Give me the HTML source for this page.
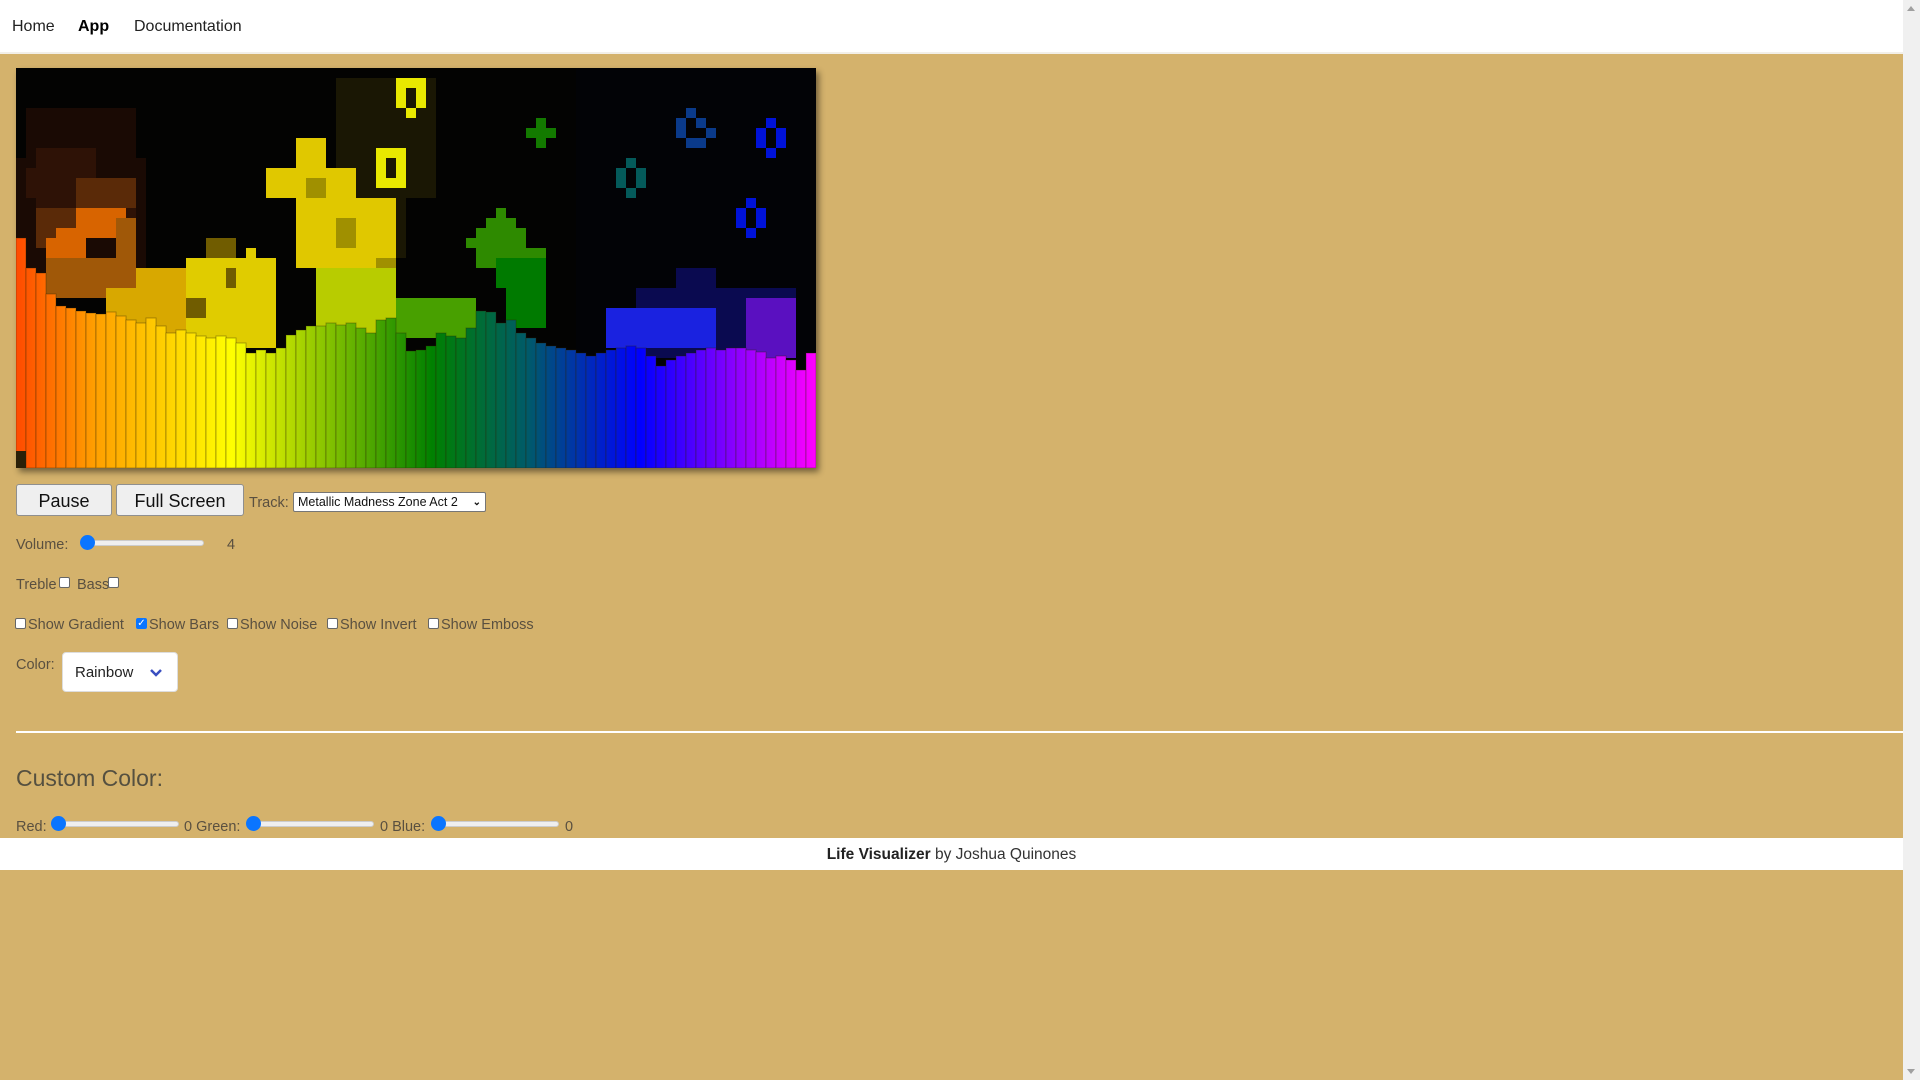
<!DOCTYPE html>
<html><head><meta charset="utf-8"><style>
*{box-sizing:border-box}
html,body{margin:0;padding:0}
body{width:1920px;height:1080px;background:#d4b26c;font-family:"Liberation Sans",sans-serif;position:relative;overflow:hidden;color:#5a5040}
.a{position:absolute;white-space:nowrap}
#nav{left:0;top:0;width:1903px;height:54px;background:#fff;border-bottom:2px solid #f2efe8}
#nav span{position:absolute;top:18px;font-size:16px;color:#222}
#sb{left:1903px;top:0;width:17px;height:1080px;background:#f0f0f0}
.btn{position:absolute;background:#efefef;border:1px solid #8f8f8f;border-radius:3px;font-size:18px;color:#111;text-align:center;line-height:32px}
.t{font-size:14.5px;color:#5a5040}
.cb{position:absolute;width:11px;height:11px;border:1px solid #666;background:#fff;border-radius:2px}
.rng{position:absolute;height:6px;background:#efefef;border:1px solid #ccc;border-radius:3px}
.th{position:absolute;width:15px;height:15px;border-radius:50%;background:#0a75ff}
</style></head><body>
<div id="nav" class="a"><span style="left:12px">Home</span><span style="left:78px;font-weight:bold;color:#000">App</span><span style="left:134px">Documentation</span></div>
<div id="sb" class="a"><div style="position:absolute;left:4px;top:6px;width:0;height:0;border-left:4px solid transparent;border-right:4px solid transparent;border-bottom:5px solid #a0a0a0"></div><div style="position:absolute;left:4px;bottom:6px;width:0;height:0;border-left:4px solid transparent;border-right:4px solid transparent;border-top:5px solid #a0a0a0"></div></div>

<svg class="a" style="left:16px;top:68px;box-shadow:3px 4px 6px rgba(0,0,0,.45)" width="800" height="400" shape-rendering="crispEdges">
<defs><linearGradient id="g" x1="0" x2="800" y1="0" y2="0" gradientUnits="userSpaceOnUse">
<stop offset="0" stop-color="#ff4a00"/><stop offset=".1" stop-color="#ffa000"/><stop offset=".27" stop-color="#ffff00"/><stop offset=".52" stop-color="#008000"/><stop offset=".64" stop-color="#005a6a"/><stop offset=".78" stop-color="#0000ff"/><stop offset="1" stop-color="#ff00ff"/></linearGradient></defs>
<rect width="800" height="400" fill="#030302"/>
<rect x="560" y="0" width="240" height="300" fill="#020306"/>
<g fill="#1a0a04"><rect x="10" y="40" width="110" height="80"/><rect x="0" y="90" width="130" height="130"/></g>
<g fill="#2e1206"><rect x="20" y="80" width="60" height="60"/><rect x="60" y="110" width="60" height="50"/><rect x="10" y="100" width="40" height="30"/></g>
<g fill="#5a2a08"><rect x="60" y="110" width="60" height="30"/><rect x="20" y="140" width="50" height="40"/></g>
<g fill="#d86400"><rect x="60" y="140" width="50" height="30"/><rect x="40" y="160" width="30" height="30"/><rect x="30" y="170" width="20" height="20"/></g>
<g fill="#a05808"><rect x="30" y="190" width="90" height="40"/><rect x="100" y="150" width="20" height="50"/></g>
<g fill="#1a1704"><rect x="320" y="10" width="100" height="120"/><rect x="330" y="100" width="60" height="90"/></g>
<g fill="#e0c800"><rect x="280" y="70" width="30" height="60"/><rect x="250" y="100" width="90" height="30"/><rect x="280" y="130" width="100" height="70"/><rect x="310" y="170" width="70" height="70"/></g>
<g fill="#a09000"><rect x="290" y="110" width="20" height="20"/><rect x="320" y="150" width="20" height="30"/><rect x="360" y="190" width="20" height="30"/></g>
<g fill="#e8e800"><rect x="380" y="10" width="30" height="10"/><rect x="380" y="20" width="10" height="20"/><rect x="400" y="20" width="10" height="20"/><rect x="390" y="40" width="10" height="10"/><rect x="360" y="80" width="10" height="40"/><rect x="380" y="80" width="10" height="40"/><rect x="370" y="80" width="10" height="10"/><rect x="370" y="110" width="10" height="10"/></g>
<g fill="#d8a800"><rect x="120" y="200" width="120" height="80"/><rect x="90" y="220" width="40" height="60"/></g>
<g fill="#e0cc00"><rect x="170" y="190" width="90" height="90"/><rect x="230" y="180" width="10" height="20"/></g>
<g fill="#705c00"><rect x="190" y="170" width="30" height="20"/><rect x="170" y="230" width="20" height="20"/><rect x="210" y="200" width="10" height="20"/></g>
<g fill="#b8cc00"><rect x="300" y="200" width="80" height="70"/></g>
<g fill="#2e8a00"><rect x="480" y="140" width="10" height="10"/><rect x="470" y="150" width="30" height="10"/><rect x="460" y="160" width="50" height="20"/><rect x="450" y="170" width="30" height="10"/><rect x="460" y="180" width="70" height="20"/></g>
<g fill="#007a00"><rect x="480" y="190" width="50" height="30"/><rect x="490" y="220" width="40" height="40"/></g>
<g fill="#48a000"><rect x="380" y="230" width="80" height="40"/></g>
<g fill="#137a00"><rect x="520" y="50" width="10" height="30"/><rect x="510" y="60" width="30" height="10"/></g>
<g fill="#0a3a8a"><rect x="670" y="40" width="10" height="10"/><rect x="660" y="50" width="10" height="20"/><rect x="680" y="50" width="10" height="10"/><rect x="690" y="60" width="10" height="10"/><rect x="670" y="70" width="20" height="10"/></g>
<g fill="#0012d8"><rect x="750" y="50" width="10" height="10"/><rect x="740" y="60" width="10" height="20"/><rect x="760" y="60" width="10" height="20"/><rect x="750" y="80" width="10" height="10"/><rect x="730" y="130" width="10" height="10"/><rect x="720" y="140" width="10" height="20"/><rect x="740" y="140" width="10" height="20"/><rect x="730" y="160" width="10" height="10"/></g>
<g fill="#045a5a"><rect x="610" y="90" width="10" height="10"/><rect x="600" y="100" width="10" height="20"/><rect x="620" y="100" width="10" height="20"/><rect x="610" y="120" width="10" height="10"/></g>
<g fill="#0a0a50"><rect x="620" y="220" width="160" height="70"/><rect x="660" y="200" width="40" height="20"/></g>
<g fill="#1a22e0"><rect x="590" y="240" width="110" height="40"/></g>
<g fill="#5a10c0"><rect x="730" y="230" width="50" height="60"/></g>
<g fill="url(#g)" stroke="#2a2000" stroke-opacity=".35" stroke-width="1">
<rect x="0" y="170" width="10" height="230"/><rect x="10" y="200" width="10" height="200"/><rect x="20" y="205" width="10" height="195"/><rect x="30" y="226" width="10" height="174"/><rect x="40" y="238" width="10" height="162"/><rect x="50" y="240" width="10" height="160"/><rect x="60" y="243" width="10" height="157"/><rect x="70" y="245" width="10" height="155"/><rect x="80" y="246" width="10" height="154"/><rect x="90" y="244" width="10" height="156"/>
<rect x="100" y="248" width="10" height="152"/><rect x="110" y="252" width="10" height="148"/><rect x="120" y="255" width="10" height="145"/><rect x="130" y="250" width="10" height="150"/><rect x="140" y="258" width="10" height="142"/><rect x="150" y="265" width="10" height="135"/><rect x="160" y="262" width="10" height="138"/><rect x="170" y="265" width="10" height="135"/><rect x="180" y="268" width="10" height="132"/><rect x="190" y="270" width="10" height="130"/>
<rect x="200" y="268" width="10" height="132"/><rect x="210" y="270" width="10" height="130"/><rect x="220" y="275" width="10" height="125"/><rect x="230" y="285" width="10" height="115"/><rect x="240" y="282" width="10" height="118"/><rect x="250" y="285" width="10" height="115"/><rect x="260" y="280" width="10" height="120"/><rect x="270" y="267" width="10" height="133"/><rect x="280" y="262" width="10" height="138"/><rect x="290" y="258" width="10" height="142"/>
<rect x="300" y="258" width="10" height="142"/><rect x="310" y="255" width="10" height="145"/><rect x="320" y="257" width="10" height="143"/><rect x="330" y="255" width="10" height="145"/><rect x="340" y="260" width="10" height="140"/><rect x="350" y="265" width="10" height="135"/><rect x="360" y="252" width="10" height="148"/><rect x="370" y="250" width="10" height="150"/><rect x="380" y="265" width="10" height="135"/><rect x="390" y="283" width="10" height="117"/>
<rect x="400" y="282" width="10" height="118"/><rect x="410" y="278" width="10" height="122"/><rect x="420" y="265" width="10" height="135"/><rect x="430" y="268" width="10" height="132"/><rect x="440" y="270" width="10" height="130"/><rect x="450" y="260" width="10" height="140"/><rect x="460" y="243" width="10" height="157"/><rect x="470" y="244" width="10" height="156"/><rect x="480" y="255" width="10" height="145"/><rect x="490" y="252" width="10" height="148"/>
<rect x="500" y="265" width="10" height="135"/><rect x="510" y="270" width="10" height="130"/><rect x="520" y="275" width="10" height="125"/><rect x="530" y="278" width="10" height="122"/><rect x="540" y="280" width="10" height="120"/><rect x="550" y="282" width="10" height="118"/><rect x="560" y="285" width="10" height="115"/><rect x="570" y="288" width="10" height="112"/><rect x="580" y="285" width="10" height="115"/><rect x="590" y="282" width="10" height="118"/>
<rect x="600" y="280" width="10" height="120"/><rect x="610" y="278" width="10" height="122"/><rect x="620" y="280" width="10" height="120"/><rect x="630" y="288" width="10" height="112"/><rect x="640" y="298" width="10" height="102"/><rect x="650" y="292" width="10" height="108"/><rect x="660" y="288" width="10" height="112"/><rect x="670" y="285" width="10" height="115"/><rect x="680" y="282" width="10" height="118"/><rect x="690" y="280" width="10" height="120"/>
<rect x="700" y="282" width="10" height="118"/><rect x="710" y="280" width="10" height="120"/><rect x="720" y="280" width="10" height="120"/><rect x="730" y="282" width="10" height="118"/><rect x="740" y="284" width="10" height="116"/><rect x="750" y="290" width="10" height="110"/><rect x="760" y="288" width="10" height="112"/><rect x="770" y="292" width="10" height="108"/><rect x="780" y="302" width="10" height="98"/><rect x="790" y="285" width="10" height="115"/>
</g>
<rect x="0" y="383" width="10" height="17" fill="#2a2008"/>
</svg>

<div class="btn" style="left:16px;top:484px;width:96px;height:32px">Pause</div>
<div class="btn" style="left:116px;top:484px;width:128px;height:32px">Full Screen</div>
<div class="a t" style="left:249px;top:495px">Track:</div>
<div class="a" style="left:293px;top:492px;width:193px;height:20px;background:#fff;border:1px solid #767676;border-radius:2px;font-size:12.5px;color:#111;line-height:19px;padding-left:4px">Metallic Madness Zone Act 2<span style="position:absolute;right:4px;top:0;font-size:10px;font-weight:bold">&#8964;</span></div>

<div class="a t" style="left:16px;top:537px">Volume:</div>
<div class="rng" style="left:80px;top:540px;width:124px"></div><div class="th" style="left:80px;top:535px"></div>
<div class="a t" style="left:227px;top:537px">4</div>

<div class="a t" style="left:16px;top:577px">Treble</div><div class="cb" style="left:59px;top:577px"></div>
<div class="a t" style="left:77px;top:577px">Bass</div><div class="cb" style="left:108px;top:577px"></div>

<div class="cb" style="left:15px;top:618px"></div><div class="a t" style="left:28px;top:617px">Show Gradient</div>
<div class="cb" style="left:136px;top:618px;background:#0a75ff;border-color:#0a75ff;color:#fff;font-size:10px;line-height:9px;text-align:center">&#10003;</div><div class="a t" style="left:149px;top:617px">Show Bars</div>
<div class="cb" style="left:227px;top:618px"></div><div class="a t" style="left:240px;top:617px">Show Noise</div>
<div class="cb" style="left:327px;top:618px"></div><div class="a t" style="left:340px;top:617px">Show Invert</div>
<div class="cb" style="left:428px;top:618px"></div><div class="a t" style="left:441px;top:617px">Show Emboss</div>

<div class="a t" style="left:16px;top:657px">Color:</div>
<div class="a" style="left:62px;top:652px;width:116px;height:40px;background:#fff;border:1px solid #ddd;border-radius:4px;font-size:15px;color:#222;line-height:40px;padding-left:12px">Rainbow
<svg style="position:absolute;left:86px;top:15px" width="14" height="10"><path d="M2 2 L7 7 L12 2" fill="none" stroke="#3a4fc0" stroke-width="2.5"/></svg></div>

<div class="a" style="left:16px;top:731px;width:1887px;height:2px;background:#fff"></div>
<div class="a" style="left:16px;top:765px;font-size:23px;color:#555040">Custom Color:</div>

<div class="a t" style="left:16px;top:819px">Red:</div>
<div class="rng" style="left:52px;top:821px;width:127px"></div><div class="th" style="left:51px;top:816px"></div>
<div class="a t" style="left:184px;top:819px">0 Green:</div>
<div class="rng" style="left:247px;top:821px;width:127px"></div><div class="th" style="left:246px;top:816px"></div>
<div class="a t" style="left:380px;top:819px">0 Blue:</div>
<div class="rng" style="left:432px;top:821px;width:127px"></div><div class="th" style="left:431px;top:816px"></div>
<div class="a t" style="left:565px;top:819px">0</div>

<div class="a" style="left:0;top:838px;width:1903px;height:32px;background:#fff;text-align:center;font-size:15.5px;line-height:34px;color:#333"><b style="color:#222">Life Visualizer</b> by Joshua Quinones</div>
</body></html>
